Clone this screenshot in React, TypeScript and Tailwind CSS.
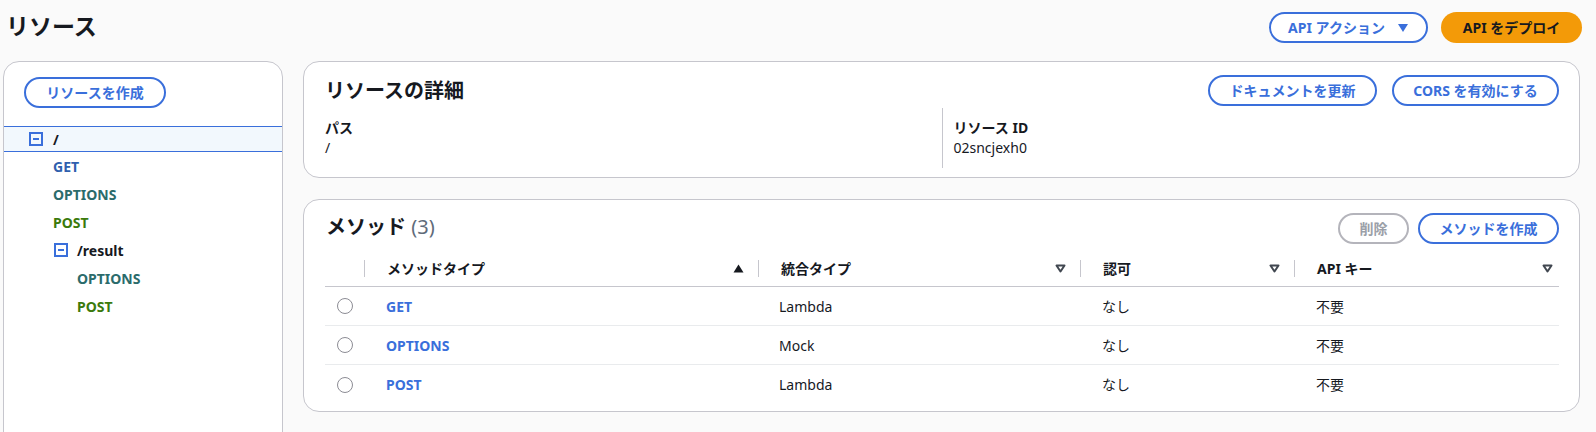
import React from "react";

const font = { fontFamily: '"Noto Sans", "Noto Sans CJK JP", sans-serif' };

const Btn = ({ children, className = "" }: { children: React.ReactNode; className?: string }) => (
  <button
    className={`h-[31px] rounded-full border-2 border-[#3a6fdb] bg-white text-[14px] font-bold text-[#3a6fdb] flex items-center justify-center leading-none whitespace-nowrap ${className}`}
  >
    {children}
  </button>
);

const MinusBox = () => (
  <span className="w-[14px] h-[14px] border-2 border-[#3a6fdb] flex items-center justify-center shrink-0">
    <span className="w-[6px] h-[2px] bg-[#3a6fdb]" />
  </span>
);

const methodColor: Record<string, string> = {
  GET: "text-[#2f5fae]",
  OPTIONS: "text-[#2b6b6b]",
  POST: "text-[#3b7a0c]",
};

const TreeItem = ({ label, indent }: { label: string; indent: string }) => (
  <div className={`h-[28px] flex items-center ${indent} text-[14px] font-bold ${methodColor[label]}`}>{label}</div>
);

const SortUp = () => (
  <svg width="11" height="9" viewBox="0 0 11 9">
    <path d="M5.5 0.5 L10.5 8.5 L0.5 8.5 Z" fill="#16191f" />
  </svg>
);

const SortDown = () => (
  <svg width="11" height="9" viewBox="0 0 11 9">
    <path d="M1.5 1.5 L9.5 1.5 L5.5 7.5 Z" fill="none" stroke="#414750" strokeWidth="2" strokeLinejoin="round" />
  </svg>
);

const HeadCell = ({ label, icon, w, pr = "pr-[14px]" }: { label: string; icon: React.ReactNode; w: string; pr?: string }) => (
  <div className={`${w} flex items-center h-full`}>
    <span className="w-px h-[17px] bg-[#c6c6cd]" />
    <span className="pl-[22px] text-[14px] font-bold text-[#16191f]">{label}</span>
    <span className={`ml-auto ${pr} flex items-center`}>{icon}</span>
  </div>
);

const rows = [
  { m: "GET", t: "Lambda" },
  { m: "OPTIONS", t: "Mock" },
  { m: "POST", t: "Lambda" },
];

export default function App() {
  return (
    <div className="w-full h-screen bg-[#fafafa] overflow-hidden text-[#16191f]" style={font}>
      <div className="h-[61px] flex items-start justify-between pl-[6px] pr-[14px]">
        <h1 className="text-[23px] font-bold mt-[11px] leading-[30px]">リソース</h1>
        <div className="flex gap-[13px] mt-[12px]">
          <Btn className="w-[159px] gap-[12px]">
            <span>API アクション</span>
            <svg width="12" height="10" viewBox="0 0 12 10">
              <path d="M1 1 L11 1 L6 9 Z" fill="#3a6fdb" />
            </svg>
          </Btn>
          <button className="h-[31px] w-[141px] rounded-full bg-[#f39a08] text-[14px] font-bold text-[#16191f] leading-none whitespace-nowrap">
            API をデプロイ
          </button>
        </div>
      </div>

      <div className="flex gap-[20px] pl-[3px]">
        <div className="w-[280px] h-[380px] bg-white border border-[#c6c6cd] rounded-tl-[16px] rounded-tr-[16px] shrink-0">
          <div className="pl-[20px] pt-[15px]">
            <Btn className="w-[142px]">リソースを作成</Btn>
          </div>
          <div className="mt-[18px] h-[26px] bg-[#f2f8fd] border-y border-[#3a6fdb] flex items-center pl-[25px] gap-[10px]">
            <MinusBox />
            <span className="text-[14px] font-bold">/</span>
          </div>
          <div>
            <TreeItem label="GET" indent="pl-[49px]" />
            <TreeItem label="OPTIONS" indent="pl-[49px]" />
            <TreeItem label="POST" indent="pl-[49px]" />
            <div className="h-[28px] flex items-center pl-[50px] gap-[9px]">
              <MinusBox />
              <span className="text-[14px] font-bold">/result</span>
            </div>
            <TreeItem label="OPTIONS" indent="pl-[73px]" />
            <TreeItem label="POST" indent="pl-[73px]" />
          </div>
        </div>

        <div className="w-[1277px] flex flex-col gap-[21px]">
          <div className="h-[117px] bg-white border border-[#c6c6cd] rounded-[16px] px-[20px]">
            <div className="flex items-center justify-between pt-[13px]">
              <h2 className="text-[20px] font-bold leading-[30px] pl-[1px]">リソースの詳細</h2>
              <div className="flex gap-[15px]">
                <Btn className="w-[169px]">ドキュメントを更新</Btn>
                <Btn className="w-[167px]">CORS を有効にする</Btn>
              </div>
            </div>
            <div className="grid grid-cols-2 mt-[2px]">
              <div className="pt-[10px] pl-[1px] text-[14px] leading-[20px]">
                <div className="font-bold">パス</div>
                <div>/</div>
              </div>
              <div className="border-l border-[#c6c6cd] pl-[11px] pt-[10px] h-[60px] text-[14px] leading-[20px]">
                <div className="font-bold">リソース ID</div>
                <div>02sncjexh0</div>
              </div>
            </div>
          </div>

          <div className="h-[213px] bg-white border border-[#c6c6cd] rounded-[16px] px-[20px]">
            <div className="flex items-center justify-between pt-[13px]">
              <h2 className="text-[20px] font-bold leading-[30px] pl-[2px] mt-[-4px]">
                メソッド <span className="font-normal text-[#5f6b7a]">(3)</span>
              </h2>
              <div className="flex gap-[9px]">
                <button className="h-[31px] w-[71px] rounded-full border-2 border-[#b4b4bb] bg-white text-[14px] font-bold text-[#9ba0a8] leading-none">
                  削除
                </button>
                <Btn className="w-[141px]">メソッドを作成</Btn>
              </div>
            </div>
            <div className="mt-[6px] pl-[1px]">
              <div className="h-[37px] flex items-center border-b border-[#c6c6cd]">
                <div className="w-[39px]" />
                <HeadCell label="メソッドタイプ" icon={<SortUp />} w="w-[394px]" />
                <HeadCell label="統合タイプ" icon={<SortDown />} w="w-[322px]" />
                <HeadCell label="認可" icon={<SortDown />} w="w-[214px]" />
                <HeadCell label="API キー" icon={<SortDown />} w="flex-1" pr="pr-[6px]" />
              </div>
              {rows.map((r, i) => (
                <div
                  key={r.m}
                  className={`h-[39px] flex items-center text-[14px] ${i < rows.length - 1 ? "border-b border-[#e9ebed]" : ""}`}
                >
                  <div className="w-[39px] flex justify-center">
                    <span className="w-[16px] h-[16px] rounded-full border border-[#8c8c94] bg-white" />
                  </div>
                  <div className="w-[394px] pl-[22px] font-bold text-[#3a6fdb]">{r.m}</div>
                  <div className="w-[322px] pl-[21px]">{r.t}</div>
                  <div className="w-[214px] pl-[22px]">なし</div>
                  <div className="flex-1 pl-[22px]">不要</div>
                </div>
              ))}
            </div>
          </div>
        </div>
      </div>
    </div>
  );
}
